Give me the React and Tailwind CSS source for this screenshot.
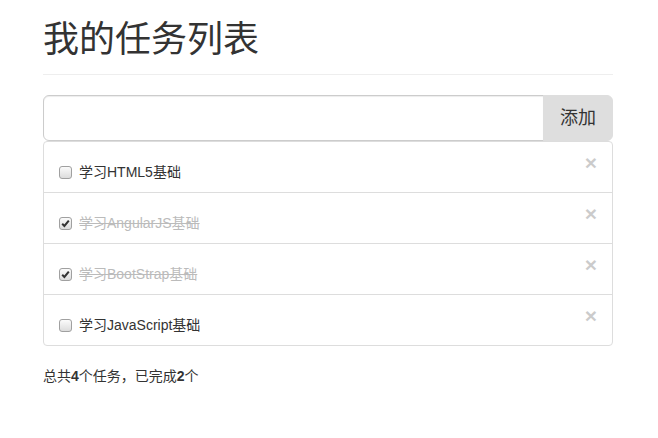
import React from "react";

const tasks = [
  { name: "学习HTML5基础", done: false },
  { name: "学习AngularJS基础", done: true },
  { name: "学习BootStrap基础", done: true },
  { name: "学习JavaScript基础", done: false },
];

function Box({ checked }) {
  return (
    <span className="absolute left-0 top-[4px] w-[13px] h-[13px] rounded-[3px] border border-[#a0a0a0] bg-gradient-to-b from-[#fbfbfb] to-[#dcdcdc] flex items-center justify-center">
      {checked && (
        <svg width="9" height="9" viewBox="0 0 9 9">
          <path d="M1.2 4.8 L3.4 7 L7.8 1.6" fill="none" stroke="#333" strokeWidth="2" />
        </svg>
      )}
    </span>
  );
}

export default function App() {
  const done = tasks.filter((t) => t.done).length;
  return (
    <div
      className="bg-white min-h-[438px] text-[14px] leading-[20px] text-[#333]"
      style={{ fontFamily: '"Liberation Sans", "Noto Sans CJK SC", sans-serif' }}
    >
      <div className="w-[570px] ml-[43px]">
        <div className="pt-[20px] pb-[14px] border-b border-[#eee]">
          <h1 className="text-[36px] leading-[40px] font-normal text-[#333]">我的任务列表</h1>
        </div>
        <div className="mt-[20px] flex h-[46px]">
          <input
            className="flex-1 min-w-0 h-[46px] border border-[#ccc] rounded-l-[6px] px-4 text-[18px] outline-none shadow-[inset_0_1px_1px_rgba(0,0,0,0.075)]"
            type="text"
          />
          <button className="w-[70px] h-[46px] -ml-px bg-[#dedede] border border-[#dedede] rounded-r-[6px] text-[18px] text-[#333]">
            添加
          </button>
        </div>
        <ul className="border border-[#ddd] rounded-[4px]">
          {tasks.map((t, i) => (
            <li
              key={i}
              className={`px-[15px] py-[10px] ${i > 0 ? "border-t border-[#ddd]" : ""} flex justify-between items-start`}
            >
              <label className="relative pl-[20px] mt-[10px] h-[20px] leading-[20px] block">
                <Box checked={t.done} />
                <span className={t.done ? "text-[#bbb] line-through" : "text-[#333]"}>{t.name}</span>
              </label>
              <span className="text-[21px] leading-[21px] font-bold text-[#000] opacity-20">×</span>
            </li>
          ))}
        </ul>
        <p className="mt-[20px]">
          总共<b>{tasks.length}</b>个任务，已完成<b>{done}</b>个
        </p>
      </div>
    </div>
  );
}
